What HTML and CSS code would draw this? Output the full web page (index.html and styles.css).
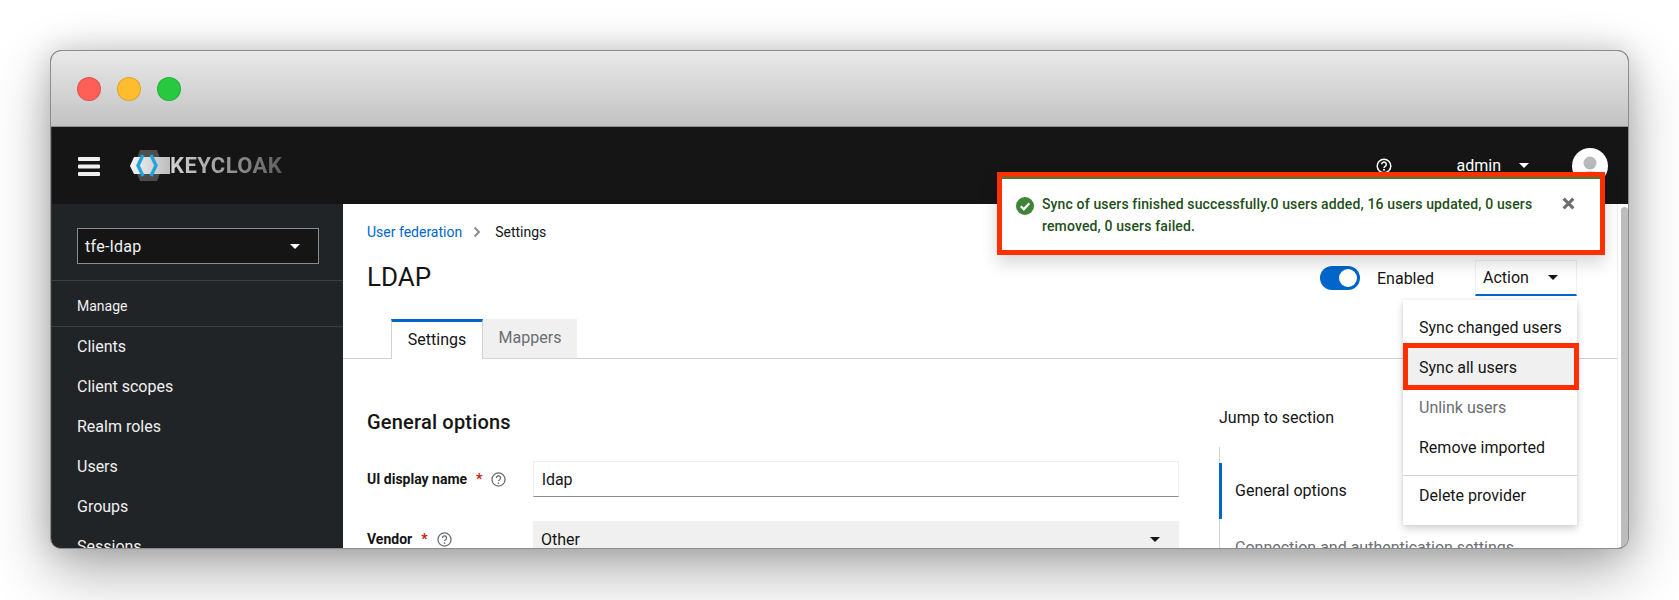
FILE: index.html
```html
<!DOCTYPE html>
<html lang="en">
<head>
<meta charset="utf-8">
<title>Keycloak LDAP</title>
<link rel="stylesheet" href="styles.css">
</head>
<body>
<div class="window">
  <div class="titlebar">
    <span class="light red"></span><span class="light yellow"></span><span class="light green"></span>
  </div>
  <header class="masthead">
    <svg class="burger" viewBox="0 0 22 19"><rect width="22" height="4" y="0" rx="1"/><rect width="22" height="4" y="7.5" rx="1"/><rect width="22" height="4" y="15" rx="1"/></svg>
    <div class="logo">
      <svg class="logo-mark" viewBox="0 0 40 32"><defs><linearGradient id="band"><stop offset="0" stop-color="#f4f4f4"/><stop offset="1" stop-color="#bdbdbd"/></linearGradient></defs><polygon points="10,0 27,0 33,16 27,31 10,31 4,16" fill="#4d4d4d"/><polygon points="0,16 4,7 40,7 40,24 4,24" fill="url(#band)"/><polyline points="13,5 8,15.500 13,26" fill="none" stroke="#1ea5dc" stroke-width="3.400"/><polyline points="21,5 26,15.500 21,26" fill="none" stroke="#1ea5dc" stroke-width="3.400"/></svg>
      <span class="logo-text">KEYCLOAK</span>
    </div>
    <div class="mast-right">
      <svg class="mast-help" viewBox="0 0 16 16"><circle cx="8" cy="8" r="6.8" fill="none" stroke="#fff" stroke-width="1.5"/><path d="M5.7 6.3a2.3 2.3 0 1 1 3.5 2c-.8.5-1.2.8-1.2 1.6" fill="none" stroke="#fff" stroke-width="1.5"/><circle cx="8" cy="11.8" r="1" fill="#fff"/></svg>
      <span class="admin">admin</span>
      <span class="caret caret-white admin-caret"></span>
      <svg class="avatar" viewBox="0 0 36 36"><circle cx="18" cy="18" r="18" fill="#fff"/><circle cx="18" cy="15" r="6.5" fill="#b8bbbe"/><ellipse cx="18" cy="31" rx="11" ry="8" fill="#d2d2d2"/></svg>
    </div>
  </header>
  <div class="body">
    <aside class="sidebar">
      <div class="realm"><div class="realm-select"><span>tfe-ldap</span><span class="caret caret-white"></span></div></div>
      <div class="nav-section">Manage</div>
      <nav class="nav">
        <a>Clients</a><a>Client scopes</a><a>Realm roles</a><a>Users</a><a>Groups</a><a>Sessions</a>
      </nav>
    </aside>
    <main class="main">
      <div class="crumbs"><a class="crumb-link">User federation</a><svg class="crumb-sep" viewBox="0 0 8 12"><path d="M1.5 1.5 6 6l-4.500 4.500" fill="none" stroke="#8a8d90" stroke-width="2"/></svg><span>Settings</span></div>
      <div class="title-row">
        <h1>LDAP</h1>
        <div class="title-actions">
          <span class="switch"><span class="knob"></span></span>
          <span class="enabled">Enabled</span>
          <div class="action"><span>Action</span><span class="caret caret-dark"></span></div>
        </div>
      </div>
      <div class="tabs"><div class="tab tab-on">Settings</div><div class="tab tab-off">Mappers</div></div>
      <div class="content">
        <form class="form">
          <h2>General options</h2>
          <div class="field">
            <label class="label">UI display name<span class="star">*</span><svg class="help" viewBox="0 0 16 16"><circle cx="8" cy="8" r="7" fill="none" stroke="#6a6e73" stroke-width="1.4"/><path d="M5.800 6.300a2.200 2.200 0 1 1 3.400 1.900c-.8.5-1.200.8-1.200 1.500" fill="none" stroke="#6a6e73" stroke-width="1.400"/><circle cx="8" cy="11.800" r=".9" fill="#6a6e73"/></svg></label>
            <div class="input">ldap</div>
          </div>
          <div class="field field-vendor">
            <label class="label">Vendor<span class="star">*</span><svg class="help" viewBox="0 0 16 16"><circle cx="8" cy="8" r="7" fill="none" stroke="#6a6e73" stroke-width="1.4"/><path d="M5.800 6.300a2.200 2.200 0 1 1 3.400 1.900c-.8.5-1.200.8-1.200 1.500" fill="none" stroke="#6a6e73" stroke-width="1.400"/><circle cx="8" cy="11.800" r=".9" fill="#6a6e73"/></svg></label>
            <div class="select"><span>Other</span><span class="caret caret-dark"></span></div>
          </div>
        </form>
        <div class="jump">
          <div class="jump-title">Jump to section</div>
          <ul class="jump-list">
            <li class="jump-on">General options</li>
            <li>Connection and authentication settings</li>
          </ul>
        </div>
      </div>
    </main>
    <div class="edge"><div class="thumb"></div></div>
  </div>
  <div class="menu">
    <div class="menu-item">Sync changed users</div>
    <div class="menu-item menu-hover">Sync all users</div>
    <div class="menu-item menu-disabled">Unlink users</div>
    <div class="menu-item">Remove imported</div>
    <div class="menu-divider"></div>
    <div class="menu-item">Delete provider</div>
  </div>
  <div class="menu-mark"></div>
  <div class="toast">
    <svg class="toast-check" viewBox="0 0 18 18"><circle cx="9" cy="9" r="9" fill="#3e8635"/><path d="M4.800 9.300 7.800 12.300 13.300 6.300" fill="none" stroke="#fff" stroke-width="2.200"/></svg>
    <div class="toast-text">Sync of users finished successfully.0 users added, 16 users updated, 0 users removed, 0 users failed.</div>
    <svg class="toast-close" viewBox="0 0 12 12"><path d="M1.500 1.500 10.500 10.500M10.500 1.500 1.500 10.500" stroke="#6a6e73" stroke-width="2.800" fill="none"/></svg>
  </div>
</div>
</body>
</html>
```
FILE: styles.css
```css
* { box-sizing: border-box; }
html { height: 600px; overflow: hidden; }
body {
  margin: 0;
  height: 600px;
  background: #fff;
  font-family: Roboto, "Liberation Sans", sans-serif;
  color: #151515;
  overflow: hidden;
  padding: 50px 50px 51px;
}
.window {
  position: relative;
  height: 499px;
  width: 1579px;
  border: 1px solid #8d8d8d;
  border-radius: 11px;
  overflow: hidden;
  display: flex;
  flex-direction: column;
  box-shadow: 0 22px 60px rgba(0,0,0,.32), 0 0 30px rgba(0,0,0,.16);
  background: #333;
}
.titlebar {
  height: 76px;
  flex: none;
  background: linear-gradient(#e9e9e9, #c2c2c2);
  border-bottom: 1px solid #8f8f8f;
  display: flex;
  align-items: center;
  gap: 16px;
  padding: 0 0 0 26px;
}
.light { width: 24px; height: 24px; border-radius: 50%; border: 1px solid rgba(0,0,0,.12); }
.red { background: #ff5f57; }
.yellow { background: #febc2e; }
.green { background: #28c840; }
.masthead {
  height: 77px;
  flex: none;
  background: #151515;
  display: flex;
  align-items: center;
  padding: 0 0 0 26px;
  color: #fff;
  margin-left: 1px;
  position: relative;
}
.burger { width: 22px; height: 19px; fill: #f0f0f0; flex: none; margin-top: 1px; }
.logo { display: flex; align-items: center; margin-left: 30px; }
.logo-mark { width: 40px; height: 32px; flex: none; }
.logo-text {
  font-family: Roboto, sans-serif;
  font-weight: 700;
  font-size: 22px;
  letter-spacing: .4px;
  background: linear-gradient(90deg, #d4d4d4, #5e5e5e);
  -webkit-background-clip: text;
  background-clip: text;
  color: transparent;
}
.mast-right { margin-left: auto; display: flex; align-items: center; padding-right: 26px; }
.mast-help { width: 16px; height: 16px; }
.admin { font-size: 16px; margin-left: 65px; }
.admin-caret { margin-left: 18px; margin-right: 73px; }
.avatar { width: 36px; height: 36px; position: absolute; right: 20px; top: 21px; }
.caret { display: inline-block; width: 0; height: 0; border-left: 5px solid transparent; border-right: 5px solid transparent; border-top: 5px solid; }
.caret-white { color: #fff; }
.caret-dark { color: #151515; }
.body { flex: 1; display: flex; min-height: 0; margin-left: 1px; }
.sidebar { width: 291px; flex: none; background: #212427; color: #f0f0f0; overflow: hidden; }
.realm { padding: 24px 24px 16px 25px; border-bottom: 1px solid #3c3f42; height: 77px; }
.realm-select {
  width: 242px; height: 36px; background: #151515; border: 1px solid #8a8d90;
  padding: 0 18px 0 7px; display: flex; align-items: center; justify-content: space-between;
  font-size: 16px; color: #f0f0f0; letter-spacing: .3px;
}
.nav-section { height: 46px; padding: 5px 0 0 25px; display: flex; align-items: center; font-size: 14px; border-bottom: 1px solid #3c3f42; }
.nav { display: flex; flex-direction: column; margin-top: -1px; }
.nav a { height: 40px; padding-left: 25px; display: flex; align-items: center; font-size: 16px; }
.main { width: 1274px; flex: none; background: #fff; overflow: hidden; display: flex; flex-direction: column; }
.edge { flex: 1; background: #fff; border-left: 1px solid #ececec; padding: 3px 0 0 3px; }
.thumb { height: 100%; background: #bcbcbc; border-radius: 4px 4px 0 0; }
.crumbs { display: flex; align-items: center; font-size: 14px; padding: 16px 0 0 24px; height: 40px; flex: none; }
.crumb-link { color: #06c; }
.crumb-sep { width: 8px; height: 12px; margin: 0 14px 0 11px; }
.title-row { display: flex; align-items: center; height: 36px; margin-top: 15px; padding-left: 24px; padding-right: 40px; flex: none; }
h1 { font-size: 26px; font-weight: 400; margin: 0; }
.title-actions { margin-left: auto; display: flex; align-items: center; padding-top: 2px; }
.switch { width: 40px; height: 24px; border-radius: 12px; background: #06c; position: relative; display: block; flex: none; }
.knob { position: absolute; right: 3px; top: 3px; width: 18px; height: 18px; border-radius: 50%; background: #fff; }
.enabled { font-size: 16px; margin-left: 17px; width: 98px; flex: none; }
.action {
  width: 102px; height: 36px; border: 1px solid #f0f0f0; border-bottom: 2px solid #06c;
  display: flex; align-items: center; justify-content: space-between; padding: 0 18px 0 7px; font-size: 16px;
}
.tabs { display: flex; height: 40px; margin-top: 24px; padding-left: 48px; border-bottom: 1px solid #d2d2d2; flex: none; }
.tab { display: flex; align-items: center; justify-content: center; font-size: 16px; height: 40px; padding-bottom: 2px; }
.tab-on { width: 92px; border-top: 3px solid #06c; border-left: 1px solid #d2d2d2; border-right: 1px solid #d2d2d2; background: #fff; }
.tab-off { width: 94px; background: #f0f0f0; color: #6a6e73; height: 39px; }
.content { display: flex; padding-left: 24px; flex: none; }
.form { width: 812px; flex: none; }
h2 { font-size: 20px; font-weight: 500; margin: 0; padding-top: 49px; line-height: 28px; height: 102px; letter-spacing: .2px; }
.field { display: flex; align-items: center; height: 36px; }
.field-vendor { margin-top: 24px; }
.label { width: 166px; flex: none; font-size: 14px; font-weight: 700; display: flex; align-items: center; }
.star { color: #c9190b; margin-left: 9px; font-weight: 700; }
.help { width: 15px; height: 15px; margin-left: 9px; }
.input {
  flex: 1; height: 36px; border: 1px solid #f0f0f0; border-bottom-color: #8a8d90;
  display: flex; align-items: center; padding-left: 8px; font-size: 16px;
}
.select {
  flex: 1; height: 36px; background: #f0f0f0; display: flex; align-items: center;
  justify-content: space-between; padding: 0 19px 0 8px; font-size: 16px;
}
.jump { margin-left: 40px; width: 300px; }
.jump-title { font-size: 16px; padding-top: 47px; line-height: 24px; }
.jump-list { list-style: none; margin: 17px 0 0; padding: 16px 0 0; border-left: 1px solid #d2d2d2; font-size: 16px; color: #6a6e73; white-space: nowrap; }
.jump-list li { height: 56px; padding-left: 16px; display: flex; align-items: center; position: relative; margin-left: -1px; }
.jump-on { color: #151515; border-left: 3px solid #06c; padding-left: 13px !important; padding-bottom: 2px; }
.menu {
  position: absolute; left: 1352px; top: 249px; width: 174px; height: 225px; background: #fff;
  box-shadow: 0 4px 8px rgba(3,3,3,.16), 0 0 4px rgba(3,3,3,.08);
  padding: 7px 0 0; display: flex; flex-direction: column;
}
.menu-item { height: 40px; padding-left: 16px; display: flex; align-items: center; font-size: 16px; flex: none; }
.menu-hover { background: #f0f0f0; }
.menu-disabled { color: #6a6e73; }
.menu-divider { height: 1px; background: #d2d2d2; margin: 8px 0 0; flex: none; }
.menu-divider + .menu-item { margin-top: -1px; }
.menu-mark { position: absolute; left: 1352px; top: 292px; width: 176px; height: 47px; border: 5px solid #ff2f00; }
.toast {
  position: absolute; left: 946px; top: 121px; width: 608px; height: 83px; background: #fff;
  border: 5px solid #ff2f00; box-shadow: 0 8px 16px rgba(3,3,3,.16);
  padding: 20px 0 0 14px; display: flex; align-items: flex-start;
}
.toast::before { content: ""; position: absolute; left: 0; right: 0; top: 0; height: 2px; background: #3e8635; }
.toast-check { width: 18px; height: 18px; flex: none; }
.toast-text { width: 495px; margin-left: 8px; margin-top: -4px; font-size: 14px; font-weight: 500; color: #1e4f18; line-height: 22px; letter-spacing: .14px; }
.toast-close { width: 13px; height: 13px; margin-left: 25px; flex: none; }
```
